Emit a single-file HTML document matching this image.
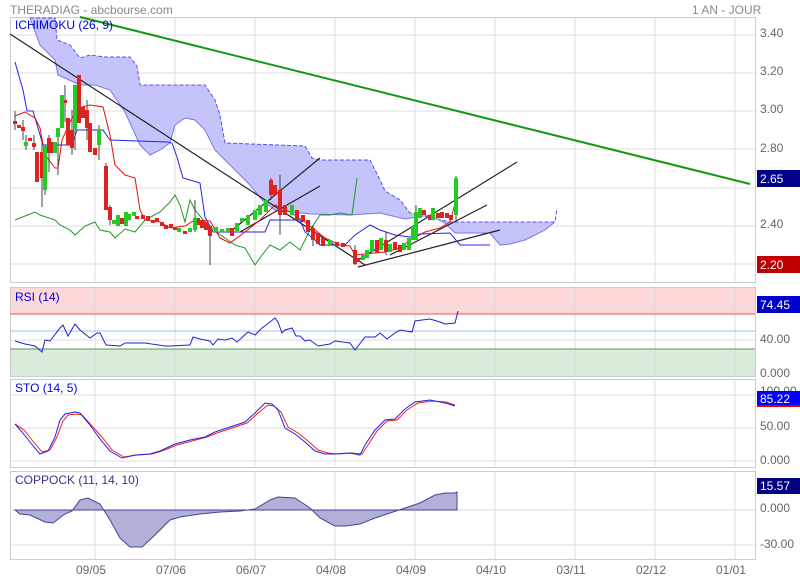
<!DOCTYPE html>
<html><head><meta charset="utf-8"><style>
html,body{margin:0;padding:0;background:#fff;}
svg{display:block;font-family:"Liberation Sans",sans-serif;}
</style></head><body>
<svg width="800" height="580" viewBox="0 0 800 580" xmlns="http://www.w3.org/2000/svg">
<rect width="800" height="580" fill="#fff"/>
<text x="10" y="14" font-size="12" fill="#888">THERADIAG - abcbourse.com</text>
<text x="692" y="14" font-size="12" fill="#888">1 AN - JOUR</text>

<!-- RSI zone fills -->
<rect x="10" y="288" width="745" height="26" fill="#fdd8d8"/>
<rect x="10" y="349" width="745" height="27" fill="#d9ecd9"/>

<!-- grids -->
<g stroke="#ddd" stroke-width="1" fill="none">
<path d="M95 18V282M175 18V282M255 18V282M335 18V282M415 18V282M495 18V282M575 18V282M655 18V282M735 18V282"/>
<path d="M95 288V376M175 288V376M255 288V376M335 288V376M415 288V376M495 288V376M575 288V376M655 288V376M735 288V376"/>
<path d="M95 380V467M175 380V467M255 380V467M335 380V467M415 380V467M495 380V467M575 380V467M655 380V467M735 380V467"/>
<path d="M95 472V559M175 472V559M255 472V559M335 472V559M415 472V559M495 472V559M575 472V559M655 472V559M735 472V559"/>
<path d="M10 35H755M10 73H755M10 111H755M10 149H755M10 188H755M10 226H755M10 264H755"/>
<path d="M10 306H755M10 340H755"/>
<path d="M10 395H755M10 428H755M10 461H755"/>
<path d="M10 510H755M10 545H755"/>
</g>
<g stroke="#ccc" fill="none">
<rect x="10.5" y="17.5" width="745" height="265"/>
<rect x="10.5" y="287.5" width="745" height="89"/>
<rect x="10.5" y="379.5" width="745" height="88"/>
<rect x="10.5" y="471.5" width="745" height="88"/>
</g>

<!-- cloud -->
<path d="M30 18 L55 18 L57 40 L70 45 L80 58 L90 55 L105 57 L130 57 L137 66 L140 85 L205 85 L215 100 L220 115 L225 143 L305 146 L312 158 L320 160 L370 160 L380 180 L385 191 L400 200 L410 213 L450 222 L555 222 L557 208 L555 222 L545 230 L525 240 L510 244 L500 245 L490 233 L455 233 L445 223 L430 215 L405 219 L380 213 L350 215 L310 214 L275 210 L262 200 L250 185 L240 175 L225 160 L215 150 L205 130 L195 120 L185 118 L175 125 L170 143 L160 150 L150 155 L140 145 L125 112 L110 90 L95 85 L80 85 L58 75 L55 60 L40 45 Z" fill="#c4c4fa"/>
<path d="M30 18 L55 18 L57 40 L70 45 L80 58 L90 55 L105 57 L130 57 L137 66 L140 85 L205 85 L215 100 L220 115 L225 143 L305 146 L312 158 L320 160 L370 160 L380 180 L385 191 L400 200 L410 213 L450 222 L555 222 L557 208" fill="none" stroke="#5555ee" stroke-dasharray="4,2"/>
<path d="M555 222 L545 230 L525 240 L510 244 L500 245 L490 233 L455 233 L445 223 L430 215 L405 219 L380 213 L350 215 L310 214 L275 210 L262 200 L250 185 L240 175 L225 160 L215 150 L205 130 L195 120 L185 118 L175 125 L170 143 L160 150 L150 155 L140 145 L125 112 L110 90 L95 85 L80 85 L58 75 L55 60 L40 45 L30 18" fill="none" stroke="#7777ee"/>

<!-- trendlines -->
<line x1="80" y1="17" x2="750" y2="184" stroke="#119911" stroke-width="2"/>
<g stroke="#222" stroke-width="1.2">
<line x1="10" y1="34" x2="365" y2="265"/>
<line x1="230" y1="232" x2="320" y2="158"/>
<line x1="240" y1="232" x2="320" y2="186"/>
<line x1="355" y1="262" x2="517" y2="162"/>
<line x1="390" y1="255" x2="487" y2="205"/>
<line x1="358" y1="267" x2="500" y2="230"/>
</g>

<!-- chikou -->
<polyline fill="none" stroke="#229922" points="15,220 25,216 35,212 40,215 55,220 60,225 70,230 75,235 85,226 95,222 100,230 110,232 115,238 125,229 135,232 145,220 160,212 170,202 175,195 180,205 185,222 190,200 195,210 205,222 215,231 225,238 235,245 245,248 255,265 262,255 270,245 280,250 290,242 300,250 310,230 320,215 330,215 340,213 352,215 357,178"/>
<!-- blue -->
<polyline fill="none" stroke="#2222ee" points="15,62 23,90 27,111 33,111 43,145 72,145 77,130 103,130 110,140 167,142 172,143 177,157 183,178 200,183 205,217 213,232 265,232 270,220 300,220 305,232 315,240 320,245 345,245 355,235 370,225 380,230 395,235 410,237 420,234 450,233 460,245 490,245"/>
<!-- red -->
<polyline fill="none" stroke="#dd1111" points="15,116 25,112 35,118 40,128 45,155 55,168 58,168 62,140 70,122 78,108 90,105 103,107 110,135 115,165 125,175 135,178 140,210 145,220 160,222 170,228 185,226 195,220 210,221 220,238 230,243 245,232 260,220 275,205 290,212 305,222 315,230 325,238 340,245 350,246 355,255 385,252 400,248 410,240 425,232 440,228 450,222 456,200"/>

<!-- candles -->
<g stroke="#444" stroke-width="1">
<path d="M15 111V130M23 120V140M26 135V150M34 135V150M42 143V207M45 145V195M49 135V172M58 128V175M65 85V122M72 110V155M75 85V150M87 100V140M99 125V160M106 163V210M110 205V225M195 200V232M210 228V265M271 178V200M280 175V235M313 225V246M355 245V265M386 232V255M416 205V240M456 176V222"/>
</g>
<g fill="#dd2222">
<rect x="13" y="121" width="4" height="3"/><rect x="17" y="125" width="4" height="3"/><rect x="21" y="127" width="4" height="4"/>
<rect x="28" y="138" width="4" height="3"/><rect x="32" y="143" width="4" height="4"/><rect x="35" y="152" width="4" height="30"/>
<rect x="40" y="152" width="4" height="26"/><rect x="47" y="138" width="4" height="15"/><rect x="50" y="142" width="4" height="11"/>
<rect x="63" y="100" width="4" height="3"/><rect x="66" y="118" width="4" height="27"/><rect x="70" y="130" width="4" height="18"/>
<rect x="77" y="75" width="4" height="48"/><rect x="81" y="107" width="4" height="11"/><rect x="85" y="110" width="4" height="18"/>
<rect x="88" y="123" width="4" height="29"/><rect x="93" y="148" width="4" height="7"/><rect x="104" y="166" width="4" height="44"/>
<rect x="108" y="207" width="4" height="13"/><rect x="120" y="218" width="4" height="6"/><rect x="135" y="216" width="4" height="3"/>
<rect x="141" y="215" width="4" height="4"/><rect x="146" y="216" width="4" height="4"/><rect x="151" y="220" width="4" height="3"/>
<rect x="155" y="218" width="4" height="4"/><rect x="160" y="222" width="4" height="4"/><rect x="164" y="225" width="4" height="4"/>
<rect x="169" y="224" width="4" height="4"/><rect x="173" y="227" width="4" height="3"/><rect x="183" y="231" width="4" height="3"/>
<rect x="196" y="218" width="4" height="7"/><rect x="200" y="221" width="4" height="7"/><rect x="204" y="222" width="4" height="8"/>
<rect x="208" y="226" width="4" height="10"/><rect x="230" y="228" width="4" height="8"/><rect x="269" y="180" width="4" height="15"/>
<rect x="273" y="185" width="4" height="10"/><rect x="278" y="190" width="4" height="25"/><rect x="283" y="205" width="4" height="10"/>
<rect x="295" y="210" width="4" height="10"/><rect x="301" y="215" width="4" height="7"/><rect x="306" y="220" width="4" height="12"/>
<rect x="311" y="228" width="4" height="12"/><rect x="316" y="233" width="4" height="11"/><rect x="321" y="238" width="4" height="8"/>
<rect x="335" y="242" width="4" height="4"/><rect x="341" y="243" width="4" height="4"/><rect x="353" y="250" width="4" height="14"/>
<rect x="356" y="258" width="4" height="4"/><rect x="375" y="240" width="4" height="13"/><rect x="384" y="240" width="4" height="12"/>
<rect x="393" y="242" width="4" height="8"/><rect x="398" y="245" width="4" height="7"/><rect x="422" y="210" width="4" height="5"/>
<rect x="428" y="215" width="4" height="5"/><rect x="436" y="213" width="4" height="5"/><rect x="440" y="212" width="4" height="6"/>
<rect x="445" y="213" width="4" height="5"/><rect x="449" y="215" width="4" height="5"/>
</g>
<g fill="#22cc22">
<rect x="24" y="142" width="4" height="4"/><rect x="43" y="145" width="4" height="45"/><rect x="53" y="142" width="4" height="11"/>
<rect x="56" y="128" width="4" height="9"/><rect x="60" y="95" width="4" height="33"/><rect x="73" y="85" width="4" height="45"/>
<rect x="97" y="130" width="4" height="15"/><rect x="112" y="220" width="4" height="4"/><rect x="116" y="215" width="4" height="11"/>
<rect x="124" y="212" width="4" height="14"/><rect x="127" y="214" width="4" height="6"/><rect x="132" y="212" width="4" height="4"/>
<rect x="177" y="228" width="4" height="4"/><rect x="188" y="228" width="4" height="4"/><rect x="193" y="218" width="4" height="12"/>
<rect x="214" y="227" width="4" height="5"/><rect x="220" y="229" width="4" height="3"/><rect x="226" y="228" width="4" height="4"/>
<rect x="235" y="223" width="4" height="8"/><rect x="240" y="218" width="4" height="4"/><rect x="246" y="215" width="4" height="10"/>
<rect x="253" y="210" width="4" height="10"/><rect x="258" y="205" width="4" height="10"/><rect x="264" y="200" width="4" height="12"/>
<rect x="290" y="205" width="4" height="10"/><rect x="328" y="240" width="4" height="6"/><rect x="361" y="255" width="4" height="5"/>
<rect x="365" y="250" width="4" height="8"/><rect x="370" y="240" width="4" height="12"/><rect x="379" y="238" width="4" height="12"/>
<rect x="388" y="244" width="4" height="8"/><rect x="402" y="243" width="4" height="7"/><rect x="407" y="238" width="4" height="12"/>
<rect x="411" y="226" width="4" height="14"/><rect x="414" y="212" width="4" height="28"/><rect x="418" y="208" width="4" height="10"/>
<rect x="431" y="208" width="4" height="12"/><rect x="454" y="178" width="4" height="37"/>
</g>
<text x="15" y="29" font-size="12" fill="#0000dd">ICHIMOKU (26, 9)</text>

<!-- RSI -->
<line x1="10" y1="314" x2="755" y2="314" stroke="#ee5555"/>
<line x1="10" y1="331" x2="755" y2="331" stroke="#99c4ee"/>
<line x1="10" y1="349" x2="755" y2="349" stroke="#559955"/>
<polyline fill="none" stroke="#2222cc" points="15,341 25,344 35,346 42,352 45,340 50,341 60,328 63,325 68,336 75,324 80,330 90,338 97,333 100,333 106,345 120,346 125,343 145,343 165,346 170,346 190,345 193,337 200,339 210,341 213,345 218,339 225,340 232,338 237,342 248,332 255,335 262,328 270,322 275,318 278,322 282,333 285,330 292,328 296,336 300,336 305,341 310,340 318,346 330,344 335,341 350,343 355,350 365,337 375,337 380,333 387,339 395,333 400,330 412,332 415,321 422,320 430,319 440,322 445,324 455,323 458,311"/>
<text x="15" y="301" font-size="12" fill="#0000dd">RSI (14)</text>

<!-- STO -->
<polyline fill="none" stroke="#ee2222" points="15,424 24,430 32,440 42,452 50,450 57,437 63,421 68,415 77,414 82,415 92,426 102,437 112,450 124,457 137,455 152,454 162,451 177,445 192,441 207,437 217,433 232,428 247,423 257,414 268,405 274,406 281,412 288,427 298,433 308,441 318,450 328,453 337,454 352,453 362,454 368,445 377,431 387,421 397,420 407,410 418,403 432,401 446,402 455,405"/>
<polyline fill="none" stroke="#2222ee" points="15,424 22,432 30,442 40,454 48,451 55,437 60,420 65,414 75,412 80,413 90,425 100,439 110,451 122,458 135,455 150,454 160,451 175,444 190,440 205,437 215,432 230,427 245,422 255,413 265,403 272,404 278,410 285,428 295,434 305,442 315,451 325,454 335,454 350,453 360,455 365,445 375,430 385,420 395,419 405,409 415,402 430,400 445,403 455,406"/>
<text x="15" y="392" font-size="12" fill="#0000dd">STO (14, 5)</text>

<!-- COPPOCK -->
<polygon fill="#b0b0d8" stroke="#444499" points="15,510 20,514 30,515 45,522 53,523 65,514 72,511 80,500 88,498 100,504 110,520 120,538 130,547 142,547 155,535 170,520 180,517 200,514 220,512 240,511 255,509 270,500 278,497 295,498 310,508 320,518 335,526 345,526 360,524 375,518 390,513 405,508 420,503 435,495 445,493 455,493 457,492 457,510"/>
<text x="15" y="484" font-size="12" fill="#333388">COPPOCK (11, 14, 10)</text>

<!-- right axis labels -->
<g font-size="12" fill="#666">
<text x="760" y="37">3.40</text><text x="760" y="75">3.20</text><text x="760" y="113">3.00</text><text x="760" y="152">2.80</text>
<text x="760" y="228">2.40</text>
<text x="760" y="343">40.00</text><text x="760" y="377">0.000</text><text x="760" y="395">100.00</text>
<text x="760" y="430">50.00</text><text x="760" y="464">0.000</text>
<text x="760" y="512">0.000</text><text x="760" y="548">-30.00</text>
</g>
<g font-size="12" fill="#fff">
<rect x="757" y="170" width="43" height="17" fill="#00008b"/><text x="760" y="183">2.65</text>
<rect x="757" y="256" width="43" height="17" fill="#c00000"/><text x="760" y="269">2.20</text>
<rect x="757" y="296" width="43" height="17" fill="#0000cc"/><text x="760" y="309">74.45</text>
<rect x="757" y="391" width="43" height="16" fill="#0000ff"/><rect x="757" y="405" width="43" height="2" fill="#dd0000"/><text x="760" y="403">85.22</text>
<rect x="757" y="478" width="43" height="16" fill="#000080"/><text x="760" y="490">15.57</text>
</g>
<!-- x labels -->
<g font-size="12" fill="#666" text-anchor="middle">
<text x="91" y="574">09/05</text><text x="171" y="574">07/06</text><text x="251" y="574">06/07</text><text x="331" y="574">04/08</text>
<text x="411" y="574">04/09</text><text x="491" y="574">04/10</text><text x="571" y="574">03/11</text><text x="651" y="574">02/12</text><text x="731" y="574">01/01</text>
</g>
</svg>
</body></html>
